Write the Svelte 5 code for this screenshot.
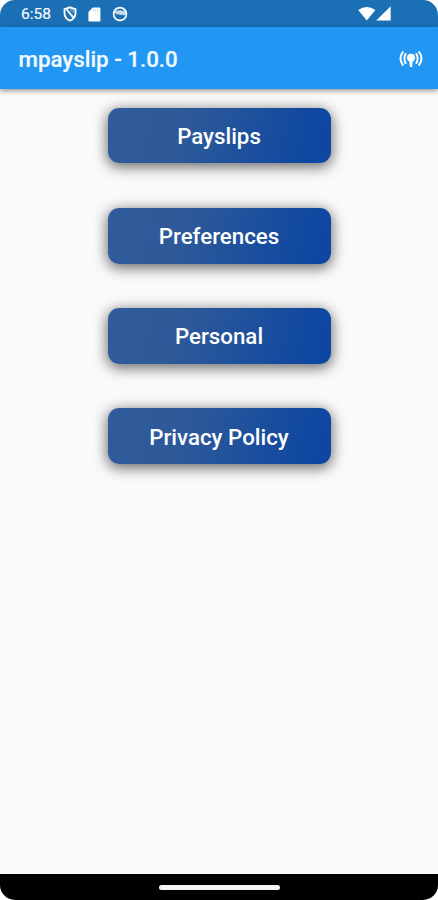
<script lang="ts">
interface Props {
  title?: string;
  version?: string;
}

let { title = "mpayslip", version = "1.0.0" }: Props = $props();

const menu: string[] = ["Payslips", "Preferences", "Personal", "Privacy Policy"];
</script>

<div class="screen">
  <div class="status-bar">
    <span class="clock">6:58</span>
    <svg class="shield" width="14" height="16" viewBox="0 0 14 16" fill="none" stroke="#fff">
      <path d="M7 1.3 12.5 3.2V7.2C12.5 10.7 10.2 13.3 7 14.6 3.8 13.3 1.5 10.7 1.5 7.2V3.2Z" stroke-width="1.8" />
      <path d="M3.6 3.4 10.6 11.8" stroke-width="1.8" />
      <path d="M7 2.3 11 3.8V7.6L9.6 6.3 7 4.6Z" fill="#fff" fill-opacity=".3" stroke="none" />
    </svg>
    <svg class="card" width="13" height="15" viewBox="0 0 13 15">
      <path fill="#fff" d="M4.8.4H11.2Q12.4.4 12.4 1.6V13.2Q12.4 14.4 11.2 14.4H1.6Q.4 14.4 .4 13.2V5Z" />
      <path stroke="#1b6fb5" stroke-opacity=".3" d="M5.4 2.4V4.4M7.5 2.4V4.4M9.6 2.4V4.4" />
    </svg>
    <svg class="face" width="16" height="16" viewBox="0 0 16 16">
      <circle cx="8" cy="8" r="6.4" fill="none" stroke="#fff" stroke-width="1.7" />
      <path fill="#fff" fill-opacity=".75" d="M2.5 4.4 5 4.8 8 4.3 11 4.8 13.5 4.4V8.4L11.8 9.4 10 8.6 8.6 9.2 7 8.2 5 8.4 3.6 7.2H2.5Z" />
    </svg>
    <svg class="signal" width="33" height="16" viewBox="0 0 33 16" fill="#fff">
      <path d="M.2 4.1Q8.8-2.3 17.4 4.1L8.8 14.6Z" />
      <path d="M32.7.2V14.6H18.2Z" />
    </svg>
  </div>

  <header class="app-bar">
    <h1>{title} - {version}</h1>
    <button class="beacon" aria-label="Connection">
      <svg width="24" height="18" viewBox="0 0 24 18" fill="none" stroke="#fff" stroke-width="2" stroke-linecap="round">
        <circle cx="12" cy="7.8" r="4" fill="#fff" stroke="none" />
        <path d="M10.3 10 10.8 17H13.2L13.7 10Z" fill="#fff" stroke="none" />
        <path d="M3.8 2.1Q-.8 8.5 3.8 14.9M20.2 2.1Q24.8 8.5 20.2 14.9" />
        <path d="M6.6 4Q4.2 8.5 6.6 13M17.4 4Q19.8 8.5 17.4 13" />
      </svg>
    </button>
  </header>

  <main>
    {#each menu as item}
      <button class="menu-button">{item}</button>
    {/each}
  </main>

  <footer class="nav-bar">
    <div class="handle"></div>
  </footer>
</div>

<style>
:global(body) {
  background: #fff;
}

.screen {
  display: flex;
  flex-direction: column;
  width: 438px;
  height: 900px;
  overflow: hidden;
  border-radius: 15px;
  background: #fafafa;
  font-family: Roboto, sans-serif;
}

.status-bar {
  display: flex;
  align-items: center;
  flex: none;
  box-sizing: border-box;
  height: 27px;
  padding: 1px 47px 0 21px;
  background: #1b6fb5;
}

.clock {
  width: 42px;
  color: #f4f9fe;
  font-size: 15.5px;
  line-height: 18px;
  -webkit-text-stroke: 0.2px #f4f9fe;
}

.card {
  margin-left: 11px;
}

.face {
  margin-left: 10.5px;
}

.signal {
  margin-left: auto;
}

.app-bar {
  display: flex;
  align-items: center;
  justify-content: space-between;
  flex: none;
  box-sizing: border-box;
  height: 62px;
  padding: 2px 15px 0 18.5px;
  background: #2196f3;
  box-shadow: 0 2px 5px rgba(0, 0, 0, 0.4);
}

h1 {
  margin: 0;
  color: #f2f9ff;
  font-size: 22.3px;
  font-weight: 500;
  line-height: 28px;
  -webkit-text-stroke: 0.2px #f2f9ff;
}

button {
  padding: 0;
  border: 0;
  font-family: inherit;
}

.beacon {
  display: flex;
  background: none;
}

main {
  display: flex;
  flex-direction: column;
  align-items: center;
  gap: 44.5px;
  flex: 1;
  padding-top: 18.5px;
}

.menu-button {
  width: 223px;
  height: 55.8px;
  padding-top: 1px;
  border-radius: 11px;
  background: linear-gradient(105deg, #305c9b 0%, #2d5999 34%, #0d47a1 92%);
  box-shadow: 0 3px 14px 1px rgba(0, 0, 0, 0.58);
  color: #fff;
  font-size: 22.3px;
  font-weight: 500;
  line-height: 28px;
}

.nav-bar {
  display: flex;
  justify-content: center;
  flex: none;
  height: 26px;
  background: #000;
}

.handle {
  width: 121px;
  height: 5px;
  margin-top: 10.5px;
  border-radius: 3px;
  background: #f5f5f5;
}
</style>
